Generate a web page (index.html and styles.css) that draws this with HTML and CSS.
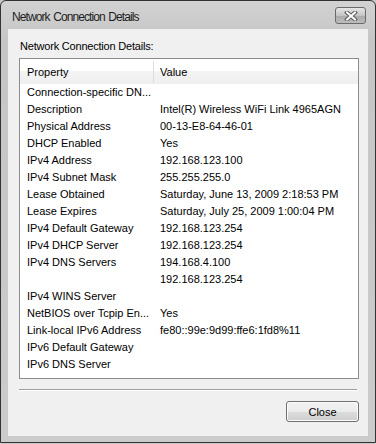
FILE: index.html
```html
<!DOCTYPE html>
<html lang="en">
<head>
  <meta charset="UTF-8" />
  <title>Network Connection Details</title>
  <link rel="stylesheet" href="styles.css">
</head>
<body>
  <div class="window">
    <div class="titlebar">
      <span class="title">Network Connection Details</span>
      <button class="close-x" aria-label="Close">
        <svg width="14" height="10" viewBox="0 0 14 10">
          <path d="M3 1.5 L11 8.5 M11 1.5 L3 8.5" stroke="#5a5a5a" stroke-width="4" stroke-linecap="square"/>
          <path d="M3 1.5 L11 8.5 M11 1.5 L3 8.5" stroke="#fff" stroke-width="2" stroke-linecap="square"/>
        </svg>
      </button>
    </div>

    <div class="client">
      <div class="label">Network Connection Details:</div>

      <div class="listbox">
        <div class="header">
          <div class="col prop">Property</div>
          <div class="col val">Value</div>
        </div>
        <div class="rows" id="rows"></div>
      </div>

      <div class="separator"></div>

      <div class="footer">
        <button class="btn">Close</button>
      </div>
    </div>
  </div>

  <script>
    const details = [
      ["Connection-specific DN...", ""],
      ["Description", "Intel(R) Wireless WiFi Link 4965AGN"],
      ["Physical Address", "00-13-E8-64-46-01"],
      ["DHCP Enabled", "Yes"],
      ["IPv4 Address", "192.168.123.100"],
      ["IPv4 Subnet Mask", "255.255.255.0"],
      ["Lease Obtained", "Saturday, June 13, 2009 2:18:53 PM"],
      ["Lease Expires", "Saturday, July 25, 2009 1:00:04 PM"],
      ["IPv4 Default Gateway", "192.168.123.254"],
      ["IPv4 DHCP Server", "192.168.123.254"],
      ["IPv4 DNS Servers", "194.168.4.100"],
      ["", "192.168.123.254"],
      ["IPv4 WINS Server", ""],
      ["NetBIOS over Tcpip En...", "Yes"],
      ["Link-local IPv6 Address", "fe80::99e:9d99:ffe6:1fd8%11"],
      ["IPv6 Default Gateway", ""],
      ["IPv6 DNS Server", ""]
    ];

    const rowsEl = document.getElementById("rows");

    details.forEach(([prop, val]) => {
      const row = document.createElement("div");
      row.className = "row";
      row.innerHTML = `<div class="col prop">${prop}</div><div class="col val">${val}</div>`;
      rowsEl.appendChild(row);
    });
  </script>
</body>
</html>
```

FILE: styles.css
```css
* {
  box-sizing: border-box;
}

body {
  margin: 0;
  background: #c9c9c9;
  font-family: 'Liberation Sans', Arial, sans-serif;
  font-size: 11px;
  color: #000;
}

.window {
  width: 376px;
  height: 443px;
  border: 1px solid #333;
  border-radius: 6px 6px 0 0;
  background: linear-gradient(to bottom, #d2d2d2, #c6c6c6 40px, #cbcbcb);
  padding: 0 7px 6px 7px;
  display: flex;
  flex-direction: column;
}

.titlebar {
  height: 28px;
  display: flex;
  align-items: center;
  justify-content: space-between;
  padding: 0 2px 0 4px;
}

.title {
  font-size: 12px;
  letter-spacing: -0.9px;
  word-spacing: 1px;
  color: #1e1e1e;
  margin-top: 3px;
}

.close-x {
  width: 31px;
  height: 17px;
  margin-top: 1px;
  padding: 0;
  border: 1px solid #6a6a6a;
  border-radius: 3px;
  background: linear-gradient(to bottom, #e6e6e6, #c4c4c4 50%, #a9a9a9 51%, #bdbdbd);
  display: flex;
  align-items: center;
  justify-content: center;
}

.client {
  flex: 1;
  background: #f0f0f0;
  padding: 9px 9px 0 11px;
  display: flex;
  flex-direction: column;
}

.label {
  line-height: 16px;
  padding-left: 1px;
  letter-spacing: -0.2px;
  margin-bottom: 4px;
}

.listbox {
  height: 321px;
  border: 1px solid #8c8c8c;
  background: #fff;
}

.header {
  height: 25px;
  display: flex;
  align-items: center;
  padding-top: 2px;
  background: linear-gradient(to bottom, #fff, #fff 50%, #f4f4f4 51%, #efefef);
  border-bottom: 1px solid #f0f0f0;
}

.header .prop {
  height: 100%;
  display: flex;
  align-items: center;
  border-right: 1px solid #dedede;
}

.col.prop {
  width: 134px;
  padding-left: 7px;
  white-space: nowrap;
  flex-shrink: 0;
}

.col.val {
  padding-left: 6px;
  white-space: nowrap;
}

.row {
  display: flex;
  height: 17px;
  line-height: 17px;
}

.separator {
  height: 1px;
  margin: 10px 2px 0 0;
  background: #a0a0a0;
  box-shadow: 0 1px 0 #fff;
}

.footer {
  display: flex;
  justify-content: flex-end;
  padding-top: 11px;
}

.btn {
  width: 73px;
  height: 21px;
  font-family: inherit;
  font-size: 11px;
  color: #000;
  border: 1px solid #707070;
  border-radius: 3px;
  background: linear-gradient(to bottom, #f2f2f2, #ebebeb 50%, #dddddd 51%, #cfcfcf);
  box-shadow: inset 0 0 0 1px #fcfcfc;
  cursor: pointer;
}
```
